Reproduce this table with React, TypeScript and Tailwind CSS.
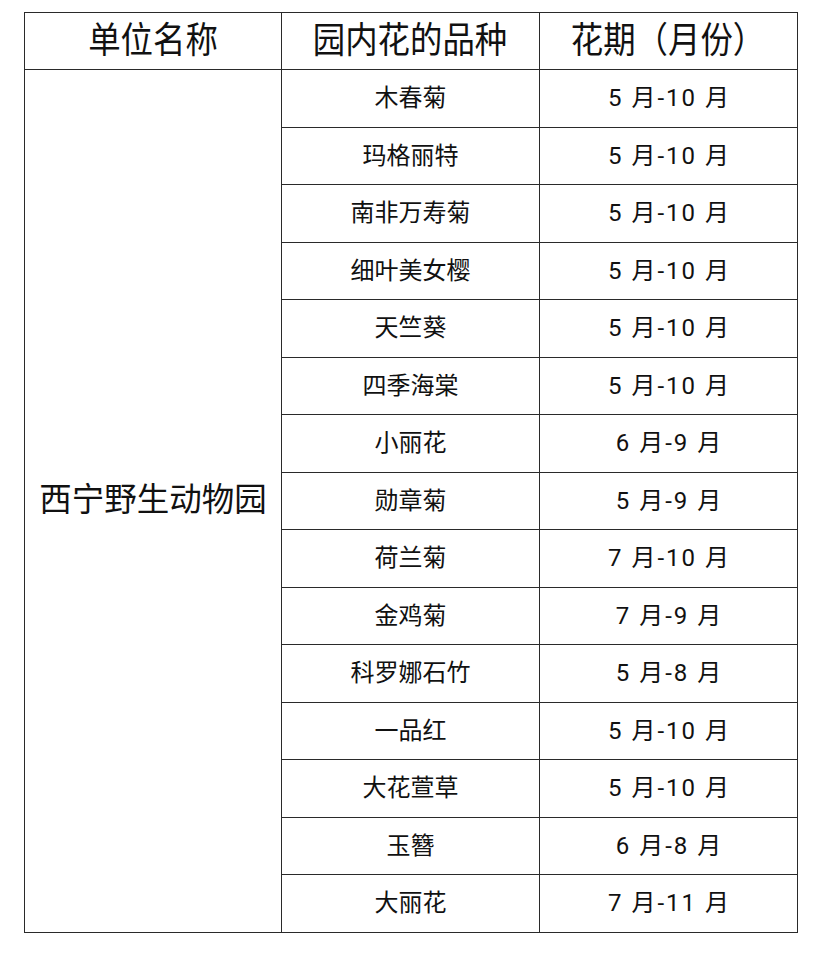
const rows: [string, string][] = [
  ["木春菊", "5 月-10 月"],
  ["玛格丽特", "5 月-10 月"],
  ["南非万寿菊", "5 月-10 月"],
  ["细叶美女樱", "5 月-10 月"],
  ["天竺葵", "5 月-10 月"],
  ["四季海棠", "5 月-10 月"],
  ["小丽花", "6 月-9 月"],
  ["勋章菊", "5 月-9 月"],
  ["荷兰菊", "7 月-10 月"],
  ["金鸡菊", "7 月-9 月"],
  ["科罗娜石竹", "5 月-8 月"],
  ["一品红", "5 月-10 月"],
  ["大花萱草", "5 月-10 月"],
  ["玉簪", "6 月-8 月"],
  ["大丽花", "7 月-11 月"],
];

const cell = "border border-[#2a2a2a] text-center align-middle";

export default function App() {
  return (
    <div className="w-[823px] h-[959px] bg-white pt-[12px] pl-[24px] font-['Roboto','Noto_Sans_CJK_SC',sans-serif] text-[#111]">
      <table className="border-collapse table-fixed w-[773px]">
        <colgroup>
          <col className="w-[257px]" />
          <col className="w-[258px]" />
          <col className="w-[258px]" />
        </colgroup>
        <thead>
          <tr className="h-[57px]">
            {["单位名称", "园内花的品种", "花期（月份）"].map((h) => (
              <th key={h} className={`${cell} font-normal`}>
                <span className="inline-block scale-x-[0.9] text-[36px] leading-none">{h}</span>
              </th>
            ))}
          </tr>
        </thead>
        <tbody>
          {rows.map(([name, period], i) => (
            <tr key={name} className="h-[57.5px]">
              {i === 0 && (
                <td rowSpan={rows.length} className={`${cell} text-[32.5px]`}>
                  西宁野生动物园
                </td>
              )}
              <td className={`${cell} text-[24px]`}>{name}</td>
              <td className={`${cell} text-[24px] tracking-[2px] pl-[2px]`}>{period}</td>
            </tr>
          ))}
        </tbody>
      </table>
    </div>
  );
}
